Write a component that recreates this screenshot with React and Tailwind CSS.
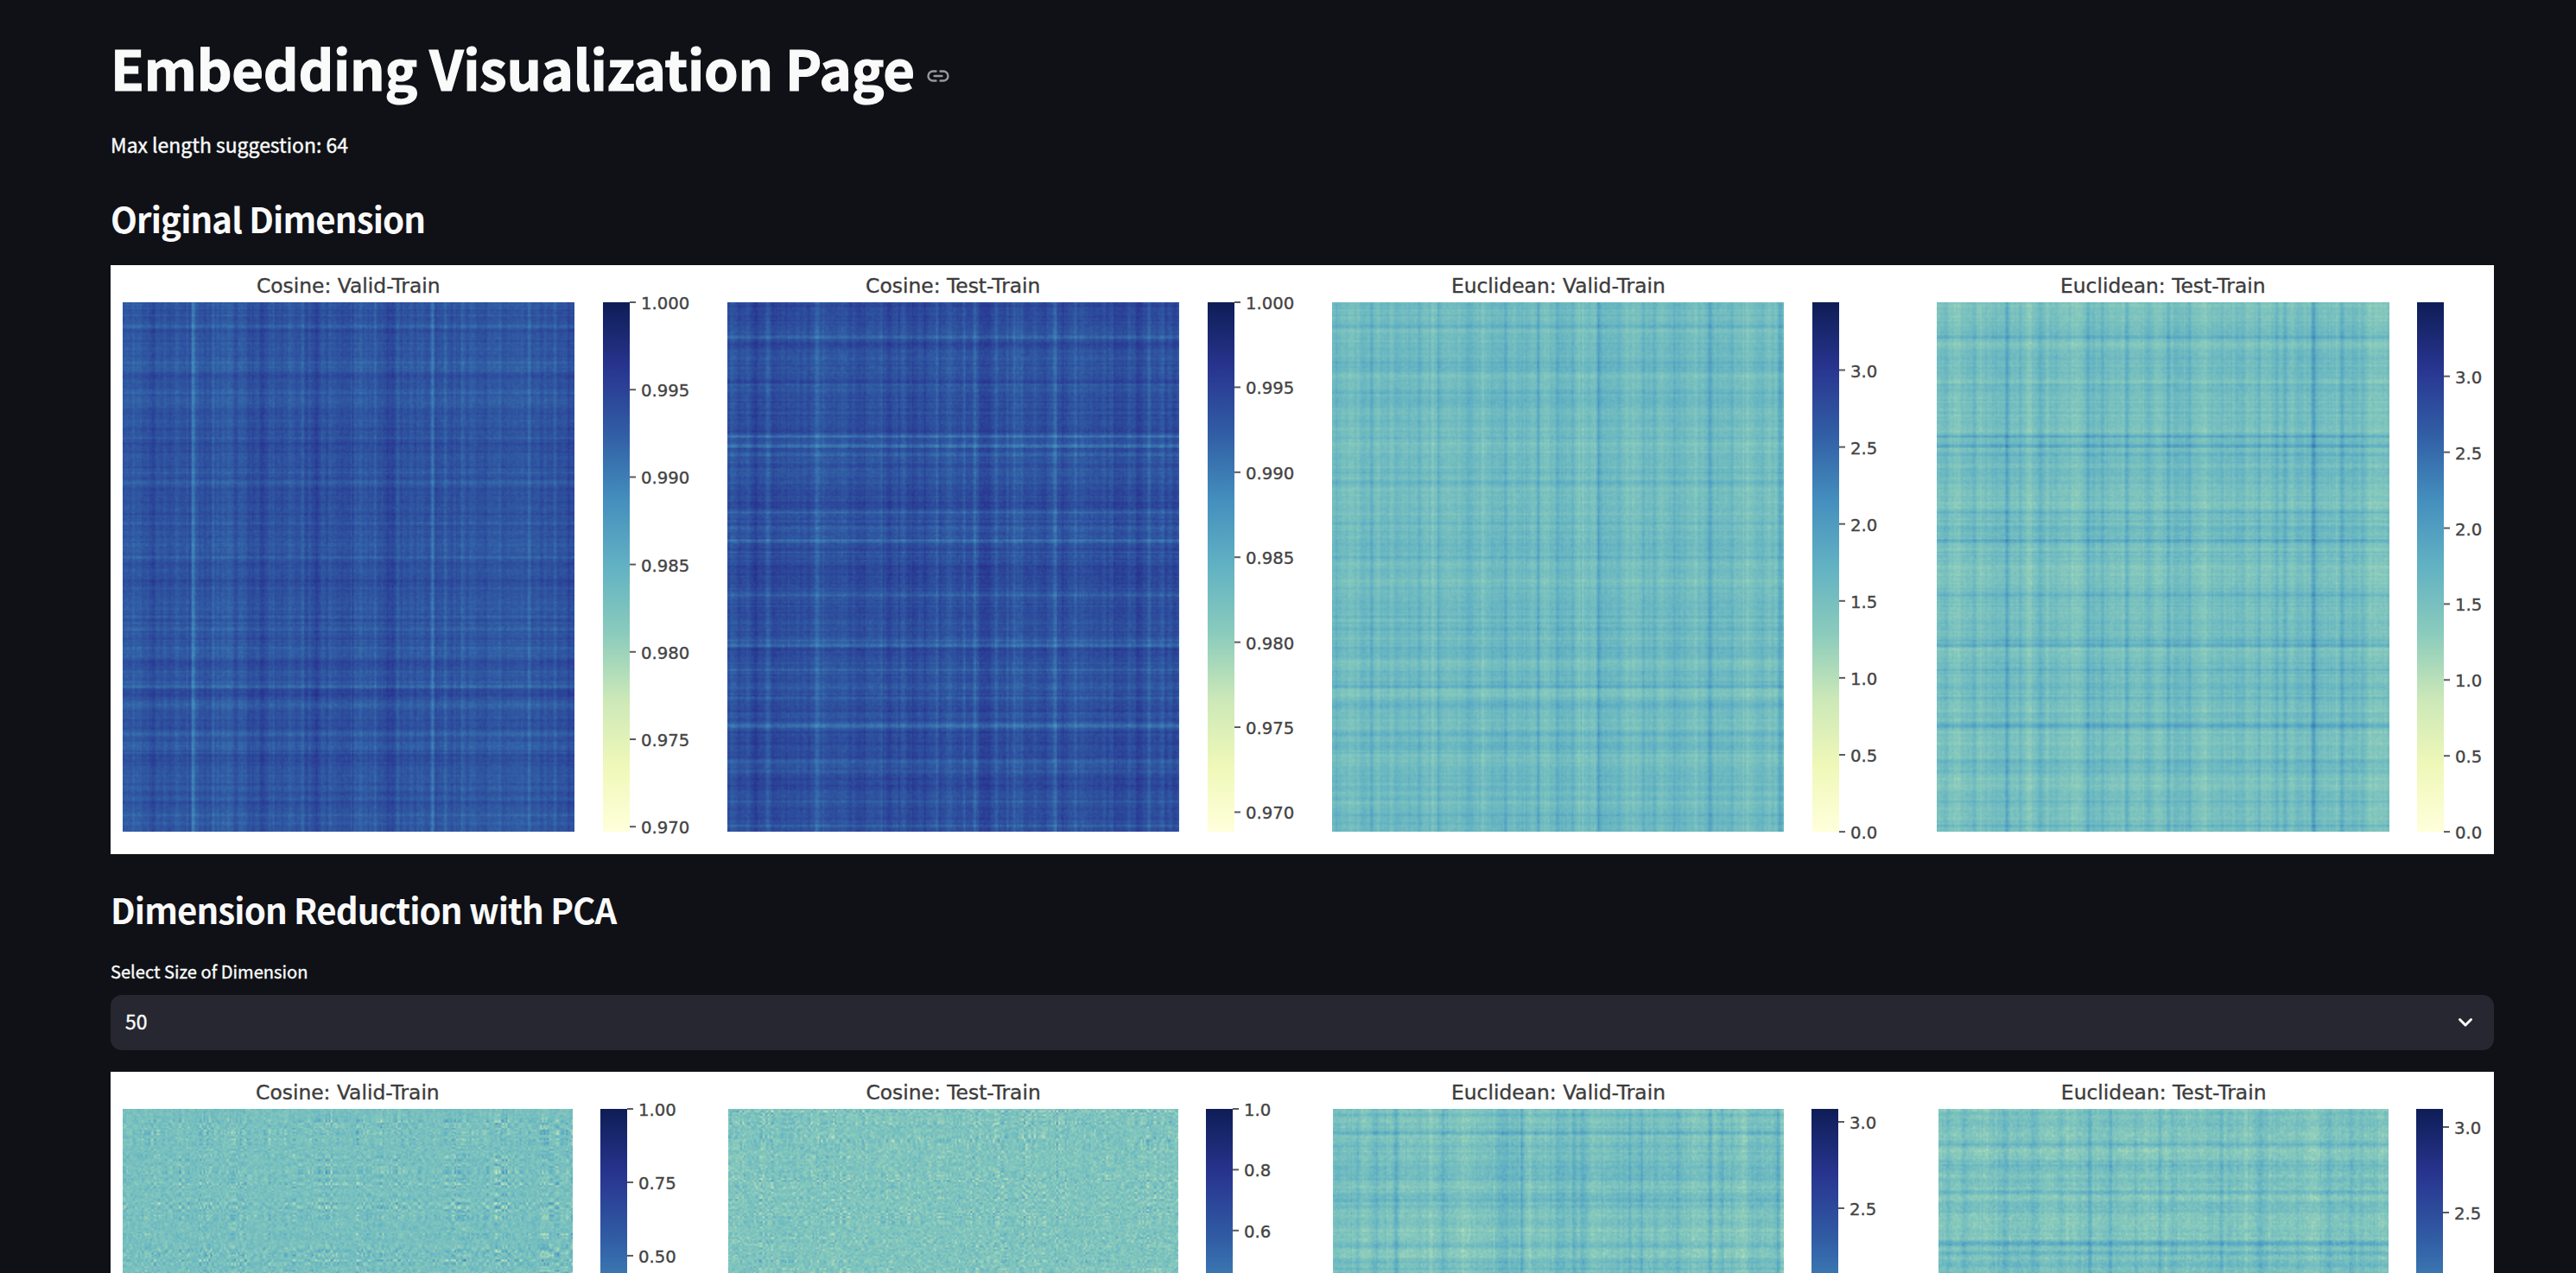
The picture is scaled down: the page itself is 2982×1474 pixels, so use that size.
import { useEffect, useRef } from "react";

/* Yellow-green-blue colour scale, from low to high. */
const SCALE = [
  [255, 255, 219],
  [239, 248, 184],
  [204, 232, 184],
  [138, 203, 188],
  [98, 178, 195],
  [68, 143, 190],
  [49, 94, 165],
  [40, 53, 144],
  [14, 29, 86],
];

function colorAt(v) {
  const t = Math.min(0.9999, Math.max(0, v)) * 8;
  const i = Math.floor(t);
  const f = t - i;
  return SCALE[i].map((c, k) => c + (SCALE[i + 1][k] - c) * f);
}

function makeRandom(seed) {
  let s = seed >>> 0;
  return () => {
    s = (s + 0x6d2b79f5) >>> 0;
    let t = s;
    t = Math.imul(t ^ (t >>> 15), t | 1);
    t ^= t + Math.imul(t ^ (t >>> 7), t | 61);
    return ((t ^ (t >>> 14)) >>> 0) / 4294967296;
  };
}

const gauss = (rnd) => (rnd() + rnd() + rnd() + rnd() - 2) * 1.7;

/* Profile along one axis: random grain, slow bands and explicit peaks [position, strength, half-width]. */
function profile(n, seed, peaks, start, span) {
  const rnd = makeRandom(seed);
  const out = new Array(n).fill(0).map(() => gauss(rnd) * 0.55);
  const coarse = new Array(Math.ceil(n / 7) + 2).fill(0).map(() => gauss(rnd) * 0.2);
  for (let i = 0; i < n; i++) {
    const a = Math.floor(i / 7);
    const f = (i % 7) / 7;
    out[i] += coarse[a] * (1 - f) + coarse[a + 1] * f;
  }
  peaks.forEach(([p, s, w = 0.7]) => {
    const c = ((p - start) / span) * n;
    const reach = 3 * w + 1;
    for (let i = Math.max(0, Math.floor(c - reach)); i < Math.min(n, c + reach); i++) {
      const d = (i + 0.5 - c) / w;
      out[i] += 1.55 * s * Math.exp((-d * d) / 2);
    }
  });
  return out;
}

const NX = 262;
const NY = 306;

function drawHeatmap(canvas, m) {
  const ctx = canvas.getContext("2d");
  const img = ctx.createImageData(NX, NY);
  const rnd = makeRandom(m.seed * 977 + 5);
  const rows = profile(NY, m.rowSeed, m.rows, m.y0, m.ySpan);
  const cols = profile(NX, m.seed, m.cols, m.x0, m.xSpan);
  const factors = [];
  for (let k = 0; k < (m.factors || 0); k++) {
    const gate = (n) => {
      const slow = Array.from({ length: Math.ceil(n / 9) + 1 }, () => 0.3 + rnd() * 1.2);
      return Array.from({ length: n }, (_, i) => gauss(rnd) * slow[Math.floor(i / 9)]);
    };
    factors.push([gate(NY), gate(NX)]);
  }
  for (let y = 0; y < NY; y++) {
    for (let x = 0; x < NX; x++) {
      let v = m.base + m.rowGain * rows[y] + m.colGain * cols[x] + m.noise * gauss(rnd);
      factors.forEach(([u, w]) => {
        v += m.factorGain * u[y] * w[x];
      });
      const [r, g, b] = colorAt(v);
      const o = (y * NX + x) * 4;
      img.data[o] = r;
      img.data[o + 1] = g;
      img.data[o + 2] = b;
      img.data[o + 3] = 255;
    }
  }
  ctx.putImageData(img, 0, 0);
}

const VALID_ROWS = [
  [127, 0.5], [175, 1.4], [182, -0.9], [230, 0.4, 2], [265, 0.6], [283, 0.9], [290, 0.9], [312, -0.5, 3],
  [345, 1.1], [367, 0.9, 1.3], [425, 0.6], [433, -0.5, 2], [463, 0.9], [490, -0.4, 2], [512, 0.6], [550, 0.9],
  [580, 1.2, 1], [600, -0.6, 3], [686, 0.9], [712, 0.4], [748, 0.6], [774, 1.9], [795, -0.4, 3], [830, -0.5, 3],
  [893, 0.4], [927, 0.9], [960, 0.8], [1007, 1], [1027, 0.9, 1.3], [1048, -0.6, 2], [1097, 1], [1110, 2],
  [1128, -0.8, 2.5], [1155, 0.9, 2], [1205, -0.4, 3], [1232, 0.9], [1265, 0.9, 3], [1290, -0.8, 2.5],
  [1345, 0.6, 3], [1372, 1.2], [1400, 0.6], [1415, -0.5, 2], [1442, 1.5], [1465, 0.4],
];
const TEST_ROWS = [
  [120, -0.6], [150, -0.4, 3], [203, 1.5, 1], [225, -0.7, 2], [242, 0.9, 2], [262, 0.5], [292, 0.6], [318, -0.8],
  [328, 1], [392, -0.7], [398, 0.9], [440, -0.4, 2], [460, 2.8], [484, 2.5], [510, 1.2], [520, 0.9], [556, 0.6],
  [580, 0.6], [605, -0.4, 3], [636, -0.8, 1.5], [657, 1.5], [678, 0.6], [699, 1], [731, 2.4], [800, -0.9, 1],
  [830, -0.5, 3], [872, 1.2], [890, 0.4], [918, -0.7, 2], [990, 1.8], [1001, 3.1], [1013, -0.7], [1045, 0.7],
  [1065, 1.2], [1100, 0.3, 5], [1140, 0.9], [1165, -0.4, 2], [1198, -0.6], [1211, 2.8, 1], [1225, -0.5, 1.5],
  [1250, -0.4, 4], [1305, 1, 1.5], [1365, -0.5, 2], [1408, 1.2], [1440, -0.4, 3], [1470, 1.3],
];

const COS_VALID = {
  seed: 11, rowSeed: 101, base: 0.782, rowGain: -0.024, colGain: -0.024, noise: 0.011,
  x0: 47, xSpan: 1140, y0: 112, ySpan: 1373, rows: VALID_ROWS,
  cols: [
    [75, 0.5, 3], [125, -1, 1.5], [165, -0.6, 2], [183, 1], [225, 4.4, 0.5], [235, 0.6, 2], [275, 1], [300, 0.8, 3],
    [320, 0.7, 2.5], [335, -0.9], [346, 1], [370, -0.6, 2], [398, -1.3, 1.3], [418, 0.5], [470, 0.6, 1.5], [500, 1],
    [542, -0.8, 2], [552, 1], [575, 0.5], [600, -0.5, 3], [645, 1, 1.3], [665, 0.4], [683, 1.2], [720, -1, 3],
    [740, 1.5], [795, 0.5], [829, 3, 0.6], [860, 0.9], [875, -0.6, 1.5], [905, 1.4, 1], [935, 0.8], [960, -0.7, 1],
    [997, 1.1], [1010, -0.6], [1033, 0.9], [1055, 1], [1072, 1.6], [1095, 0.7], [1140, 1], [1175, -1, 2],
  ],
};
const COS_TEST = {
  seed: 12, rowSeed: 202, base: 0.79, rowGain: -0.026, colGain: -0.023, noise: 0.012,
  x0: 47, xSpan: 1140, y0: 112, ySpan: 1373, rows: TEST_ROWS,
  cols: [
    [58, 0.8], [98, 1], [120, -1.3, 1.5], [150, 1.6, 1], [165, -0.5, 3], [210, 0.4], [255, -0.7], [273, 2.6],
    [292, 1.4, 1], [345, 0.5], [385, -0.6, 2], [435, 0.9], [455, -0.6, 2], [490, 1], [520, -0.5, 3], [545, -0.9],
    [575, 1.5], [610, 1.2], [645, 1.6], [672, 2.2], [700, -1.3, 2], [715, -0.6], [727, 1.4], [740, -0.7, 1.5],
    [775, 1, 3], [825, 1], [845, -0.6, 2], [874, 3], [890, -0.5, 2], [925, 1.2], [940, 0.9], [985, 0.4],
    [1015, 1], [1040, -0.6, 2], [1085, -1.5, 1.3], [1112, 1.4], [1145, 0.9], [1170, -0.4, 2],
  ],
};
const EUC_VALID = {
  seed: 13, rowSeed: 101, base: 0.454, rowGain: 0.026, colGain: 0.024, noise: 0.012,
  x0: 49, xSpan: 1139, y0: 112, ySpan: 1373, rows: VALID_ROWS,
  cols: [
    [58, 0.7, 2.5], [85, 0.6], [150, 1.5], [165, -1, 1.5], [183, 0.8], [200, -0.9], [213, 0.9], [245, 0.5],
    [270, 0.9], [303, -0.9, 1.5], [318, 1.4], [345, -0.4, 2], [395, 1, 2.5], [430, -0.8, 1.5], [450, 0.6],
    [486, 1.8], [530, 0.4, 3], [568, 3.2, 0.55], [590, -0.5, 2], [617, 1.6], [635, 0.5, 2], [655, 0.8],
    [678, -0.8, 1.5], [708, -1, 1], [721, 3.1], [735, 0.6, 2], [770, 1.1], [800, -0.7, 3], [835, 1.1],
    [863, 0.9], [875, -0.8, 1.5], [915, 1.1, 2], [940, 0.7], [965, -0.5, 2], [1001, 3.3], [1020, 0.6],
    [1055, 0.8], [1090, -0.8, 2.5], [1130, 0.9], [1150, -0.6, 1], [1178, 2.4],
  ],
};
const EUC_TEST = {
  seed: 14, rowSeed: 202, base: 0.437, rowGain: 0.027, colGain: 0.024, noise: 0.013,
  x0: 45, xSpan: 1078, y0: 112, ySpan: 1373, rows: TEST_ROWS,
  cols: [
    [68, 0.9, 2], [90, -0.8, 3], [135, 1], [150, -0.8, 1], [185, 0.5], [213, 3], [230, 0.5], [245, 1.3],
    [262, -1, 1.5], [290, 0.9, 2], [308, -0.6], [330, 0.8], [350, -0.6, 1.5], [377, -1.2, 2], [405, 2], [420, 1.2],
    [440, 1.9], [460, -0.5, 1.5], [498, 2.5], [550, 1.2, 1.5], [575, -0.4, 2], [597, 2.5, 0.6], [615, 0.8, 2],
    [648, 1.1], [685, -1, 1.5], [703, 0.8], [725, 1], [765, 0.9, 2], [790, -0.4, 2], [812, 1.2], [820, -0.8],
    [855, 1.7], [875, 1.7], [890, -0.5, 2], [908, 1, 1.5], [943, 3.5], [955, 0.6, 3], [975, 0.8], [1010, 1.9],
    [1035, 0.8], [1060, 1], [1090, -0.9, 3], [1115, -0.5],
  ],
};
const PCA_COS_VALID = {
  seed: 21, rowSeed: 301, base: 0.43, rowGain: 0.005, colGain: 0.004, noise: 0.026, factors: 3, factorGain: 0.024,
  x0: 0, xSpan: 1, y0: 0, ySpan: 1, rows: [], cols: [],
};
const PCA_COS_TEST = {
  seed: 22, rowSeed: 302, base: 0.41, rowGain: 0.003, colGain: 0.003, noise: 0.032, factors: 3, factorGain: 0.026,
  x0: 0, xSpan: 1, y0: 0, ySpan: 1, rows: [], cols: [],
};
const PCA_EUC_VALID = {
  seed: 23, rowSeed: 303, base: 0.425, rowGain: 0.023, colGain: 0.025, noise: 0.02,
  x0: 51, xSpan: 1135, y0: 192, ySpan: 1839,
  rows: [
    [200, -0.5], [214, 1.3, 1], [225, -0.8], [275, 2.4], [287, -0.9, 1.2], [320, 0.5], [350, 0.5], [360, -0.7],
    [400, 1.1, 1], [430, 1.2, 1.5], [452, -0.7, 2], [490, 0.5], [508, 1.9, 0.9], [518, -0.8], [531, 0.9, 1.5],
    [555, -0.6, 3], [592, 0.6], [625, -0.6, 3], [637, 0.9], [646, -0.8], [662, 1, 1.5], [685, -0.3, 2],
    [708, -0.8, 1.5], [722, 0.8, 1.2], [745, 0.5],
  ],
  cols: [
    [60, 0.5, 2], [115, 1.8], [128, -0.8, 1.5], [160, 1.4], [180, 0.7], [211, 3.3], [225, -0.7, 1.5], [270, 0.5],
    [303, -0.7, 1.5], [330, 1, 1.5], [380, -0.8, 3], [410, -0.6], [475, 1.6, 2.5], [505, 0.6, 3], [527, 2.6],
    [545, -0.4, 2], [598, 0.9], [617, 1.6, 1], [635, 0.7, 2], [658, 2], [683, 1.7, 2], [705, -0.7, 2.5],
    [770, 0.5], [797, 1.9], [829, 1.6, 1], [860, 0.6, 2], [900, 0.5], [918, 1], [960, -0.8, 2.5], [1000, 2.7],
    [1012, -0.7], [1030, 1], [1080, -1.1, 2.5], [1110, 1], [1125, 0.7], [1170, 2.3], [1182, -0.6],
  ],
};
const PCA_EUC_TEST = {
  seed: 24, rowSeed: 304, base: 0.418, rowGain: 0.024, colGain: 0.022, noise: 0.022,
  x0: 50, xSpan: 1072, y0: 492, ySpan: 1839,
  rows: [
    [494, -1], [508, 1], [525, -0.7], [540, 0.4, 2], [562, -0.3, 2], [600, -0.3, 2], [614, 2.2, 1.1],
    [642, -0.8, 3], [690, 1.1, 4], [727, -0.8], [750, 0.5, 3], [769, -1.2], [780, 2.1], [800, -0.6, 1.5],
    [822, 0.5], [850, 0.6], [865, -0.8], [895, -0.3, 3], [940, -0.7], [960, 3.2, 1.1], [973, -0.8],
    [991, 3], [1010, -0.4], [1030, 0.9, 2], [1050, -0.6],
  ],
  cols: [
    [75, 1.2], [90, -0.7, 2], [112, 1.1], [160, -0.5, 3], [210, 1.5, 1.2], [230, 0.4], [278, 1.6, 2], [290, -0.6],
    [315, -0.5, 2], [345, 0.8], [365, -0.7, 3], [410, 2.5], [430, -0.8], [460, 1.9], [500, -0.6, 2],
    [520, 0.9], [550, -0.5], [577, 2.8], [592, -0.6], [610, 0.8, 2], [650, 0.5], [683, -0.9, 2], [703, 1],
    [723, 1.9], [762, 0.6], [782, -1, 1.5], [815, 1.9, 1], [840, -0.5, 2], [905, 0.8], [940, -0.8, 3],
    [978, 1.2, 2], [1000, -0.4, 2], [1035, 1.4, 1], [1058, 0.6], [1090, 0.7], [1105, -0.8, 2],
  ],
};

/* Evenly spaced ticks: labels from the top down, first tick at `top`, `step` pixels apart. */
const ticks = (labels, top, step) => labels.map((label, i) => ({ label, y: top + i * step }));

const ORIGINAL = [
  {
    title: "Cosine: Valid-Train", heat: COS_VALID, pad: "pl-[13.6px]", size: "w-[523.4px]", gap: "ml-[32.6px]",
    ticks: ticks(["1.000", "0.995", "0.990", "0.985", "0.980", "0.975", "0.970"], 0, 101.2),
  },
  {
    title: "Cosine: Test-Train", heat: COS_TEST, pad: "pl-[13.6px]", size: "w-[523.4px]", gap: "ml-[32.6px]",
    ticks: ticks(["1.000", "0.995", "0.990", "0.985", "0.980", "0.975", "0.970"], 0, 98.4),
  },
  {
    title: "Euclidean: Valid-Train", heat: EUC_VALID, pad: "pl-[14.4px]", size: "w-[523px]", gap: "ml-[33px]",
    ticks: ticks(["3.0", "2.5", "2.0", "1.5", "1.0", "0.5", "0.0"], 78.5, 89.1),
  },
  {
    title: "Euclidean: Test-Train", heat: EUC_TEST, pad: "pl-[14px]", size: "w-[523.6px]", gap: "ml-[32.4px]",
    ticks: ticks(["3.0", "2.5", "2.0", "1.5", "1.0", "0.5", "0.0"], 85.7, 87.9),
  },
];

const REDUCED = [
  {
    title: "Cosine: Valid-Train", heat: PCA_COS_VALID, pad: "pl-[13.6px]", size: "w-[521.6px]", gap: "ml-[32px]",
    ticks: ticks(["1.00", "0.75", "0.50"], 0, 85),
  },
  {
    title: "Cosine: Test-Train", heat: PCA_COS_TEST, pad: "pl-[15px]", size: "w-[521.2px]", gap: "ml-[31.8px]",
    ticks: ticks(["1.0", "0.8", "0.6"], 0, 70.4),
  },
  {
    title: "Euclidean: Valid-Train", heat: PCA_EUC_VALID, pad: "pl-[15.4px]", size: "w-[521.2px]", gap: "ml-[32.4px]",
    ticks: ticks(["3.0", "2.5"], 15, 100),
  },
  {
    title: "Euclidean: Test-Train", heat: PCA_EUC_TEST, pad: "pl-[16.2px]", size: "w-[521px]", gap: "ml-[32px]",
    ticks: ticks(["3.0", "2.5"], 21, 99),
  },
];

function Heatmap({ model, size }) {
  const ref = useRef(null);
  useEffect(() => {
    drawHeatmap(ref.current, model);
  }, [model]);
  return <canvas ref={ref} width={NX} height={NY} className={`block h-[613px] shrink-0 ${size}`} />;
}

function Colorbar({ id, marks, gap }) {
  return (
    <svg width="110" height="613" className={`shrink-0 overflow-visible ${gap}`}>
      <defs>
        <linearGradient id={id} x1="0" y1="1" x2="0" y2="0">
          {SCALE.map((c, i) => (
            <stop key={i} offset={i / 8} stopColor={`rgb(${c.join(",")})`} />
          ))}
        </linearGradient>
      </defs>
      <rect x="0" y="0" width="31" height="613" fill={`url(#${id})`} />
      {marks.map((t) => (
        <g key={t.label}>
          <rect x="31" y={t.y - 1} width="7" height="2" fill="#5c5c5c" />
          <text
            x="44"
            y={t.y + 8}
            fontSize="19.7"
            fill="#444444"
            stroke="#444444"
            strokeWidth="0.35"
            className="font-['DejaVu_Sans',sans-serif]"
          >
            {t.label}
          </text>
        </g>
      ))}
    </svg>
  );
}

function Figure({ name, plots, height }) {
  return (
    <div className={`flex w-[2759px] shrink-0 overflow-hidden bg-white ${height}`}>
      {plots.map((p, i) => (
        <div key={p.title} className={`w-[700px] shrink-0 ${p.pad}`}>
          <div
            className={`flex h-[43px] items-center justify-center pt-[7px] font-['DejaVu_Sans',sans-serif] text-[23.4px] leading-none whitespace-nowrap text-[#3c3c3c] [-webkit-text-stroke:0.35px_#3c3c3c] ${p.size}`}
          >
            {p.title}
          </div>
          <div className="flex">
            <Heatmap model={p.heat} size={p.size} />
            <Colorbar id={`${name}-${i}`} marks={p.ticks} gap={p.gap} />
          </div>
        </div>
      ))}
    </div>
  );
}

function LinkIcon() {
  return (
    <svg
      width="26"
      height="14"
      viewBox="0 0 26 14"
      fill="none"
      stroke="#97989c"
      strokeWidth="2.4"
      strokeLinecap="round"
      className="mt-[21px] ml-[14px]"
    >
      <path d="M10.5 1.5H7a5.5 5.5 0 0 0 0 11h3.5" />
      <path d="M15.5 1.5H19a5.5 5.5 0 0 1 0 11h-3.5" />
      <path d="M8.6 7h8.8" />
    </svg>
  );
}

export default function App() {
  return (
    <main className="flex h-[1474px] w-[2982px] flex-col overflow-hidden bg-[#0f1116] pt-[37px] pl-[128px] font-['Noto_Sans_CJK_SC',sans-serif] text-[#fafafa]">
      <div className="flex h-[80px] shrink-0 items-center">
        <h1 className="text-[63.4px] leading-[80px] font-bold tracking-[-0.23px] whitespace-nowrap [-webkit-text-stroke:1.2px_#fafafa]">
          Embedding Visualization Page
        </h1>
        <LinkIcon />
      </div>
      <p className="mt-[30px] h-[40px] shrink-0 text-[22.95px] leading-[40px] [-webkit-text-stroke:0.4px_#fafafa]">
        Max length suggestion: 64
      </p>
      <h2 className="mt-[38px] h-[56px] shrink-0 text-[40.2px] leading-[56px] font-semibold tracking-[-0.88px]">
        Original Dimension
      </h2>
      <div className="mt-[26px] flex shrink-0">
        <Figure name="original" plots={ORIGINAL} height="h-[682px]" />
      </div>
      <h2 className="mt-[36px] h-[56px] shrink-0 text-[40.2px] leading-[56px] font-semibold tracking-[-0.88px]">
        Dimension Reduction with PCA
      </h2>
      <label className="mt-[28px] h-[32px] shrink-0 text-[20.1px] leading-[32px] [-webkit-text-stroke:0.35px_#fafafa]">
        Select Size of Dimension
      </label>
      <div className="mt-[11px] flex h-[64px] w-[2759px] shrink-0 items-center justify-between rounded-[13px] bg-[#262730] pr-[24px] pl-[17px]">
        <span className="pb-[4px] text-[22.95px] leading-[40px] [-webkit-text-stroke:0.4px_#fafafa]">50</span>
        <svg
          width="18"
          height="12"
          viewBox="0 0 18 12"
          fill="none"
          stroke="#fafafa"
          strokeWidth="3"
          strokeLinecap="round"
          strokeLinejoin="round"
        >
          <path d="M2.5 2.5 9 9l6.500-6.500" />
        </svg>
      </div>
      <div className="mt-[25px] flex shrink-0">
        <Figure name="reduced" plots={REDUCED} height="h-[682px]" />
      </div>
    </main>
  );
}
